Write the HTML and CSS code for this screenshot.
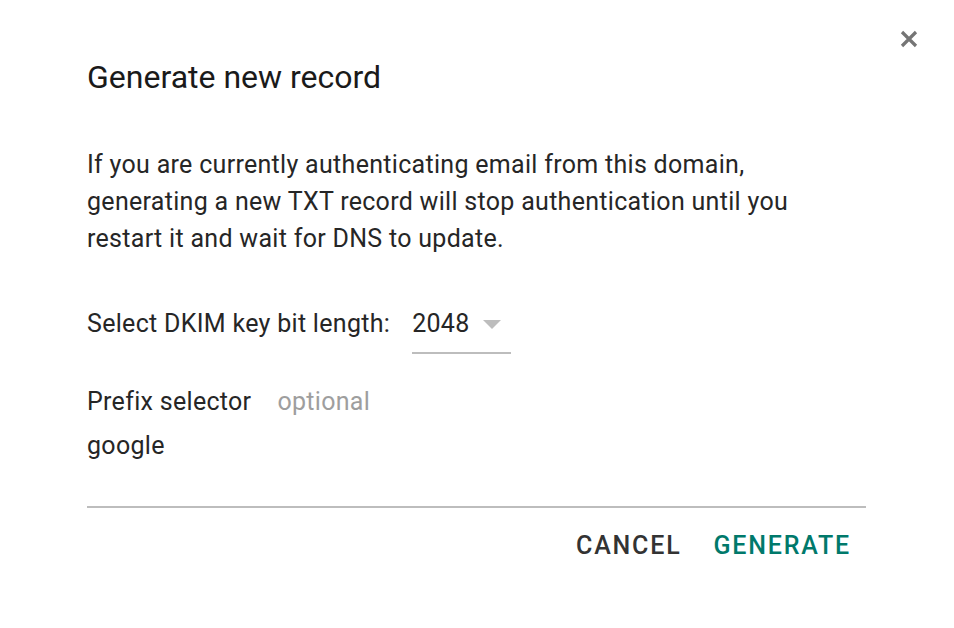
FILE: index.html
```html
<!DOCTYPE html>
<html>
<head>
<meta charset="utf-8">
<link rel="stylesheet" href="styles.css">
</head>
<body>
<div class="dialog">
  <button class="close" aria-label="Close">
    <svg width="20" height="20" viewBox="0 0 20 20"><path d="M3 3 L17 17 M17 3 L3 17" stroke="#757575" stroke-width="3.2" stroke-linecap="butt"/></svg>
  </button>
  <h1 class="title">Generate new record</h1>
  <p class="desc">If you are currently authenticating email from this domain, generating a new TXT record will stop authentication until you restart it and wait for DNS to update.</p>
  <div class="row-select">
    <span class="label">Select DKIM key bit length:</span>
    <div class="select">
      <span class="value">2048</span>
      <span class="arrow"></span>
    </div>
  </div>
  <div class="prefix">
    <div class="prefix-label"><span>Prefix selector</span><span class="optional">optional</span></div>
    <div class="prefix-value">google</div>
  </div>
  <div class="footer">
    <button class="btn cancel">CANCEL</button>
    <button class="btn generate">GENERATE</button>
  </div>
</div>
</body>
</html>
```
FILE: styles.css
```css
html, body {
  margin: 0;
  padding: 0;
  background: #fff;
}
body {
  font-family: Roboto, "Noto Sans", sans-serif;
  color: #262626;
}
.dialog {
  position: relative;
  width: 954px;
  height: 628px;
  box-sizing: border-box;
  padding: 57px 88px 0 87px;
}
.close {
  position: absolute;
  top: 29px;
  left: 899px;
  width: 20px;
  height: 20px;
  padding: 0;
  border: 0;
  background: none;
}
.close svg { display: block; }
.title {
  margin: 0;
  font-size: 32px;
  font-weight: 400;
  line-height: 40px;
  color: #1a1a1a;
}
.desc {
  margin: 49px 0 0 0;
  font-size: 25px;
  line-height: 37px;
  letter-spacing: 0.3px;
  width: 740px;
}
.row-select {
  display: flex;
  align-items: flex-start;
  margin-top: 48px;
  font-size: 25px;
  line-height: 37px;
  letter-spacing: 0.3px;
}
.label { margin-right: 22px; }
.select {
  display: flex;
  align-items: flex-start;
  width: 99px;
  height: 49px;
  box-sizing: border-box;
  border-bottom: 2px solid #bdbdbd;
}
.value { line-height: 37px; }
.arrow {
  margin-left: 13px;
  margin-top: 15px;
  width: 0;
  height: 0;
  border-left: 9px solid transparent;
  border-right: 9px solid transparent;
  border-top: 9px solid #bdbdbd;
}
.prefix {
  margin-top: 29px;
  font-size: 25px;
  line-height: 37px;
  letter-spacing: 0.3px;
}
.optional {
  color: #9e9e9e;
  margin-left: 26px;
}
.prefix-value {
  margin-top: 7px;
}
.footer {
  margin-top: 42px;
  border-top: 2px solid #bdbdbd;
  display: flex;
  justify-content: flex-end;
  padding-top: 19px;
  padding-right: 15px;
  gap: 32px;
}
.btn {
  border: 0;
  background: none;
  padding: 0;
  font-family: Roboto, "Noto Sans", sans-serif;
  font-size: 25px;
  font-weight: 500;
  line-height: 37px;
  letter-spacing: 1.8px;
}
.cancel { color: #333; }
.generate { color: #00796b; }
```
